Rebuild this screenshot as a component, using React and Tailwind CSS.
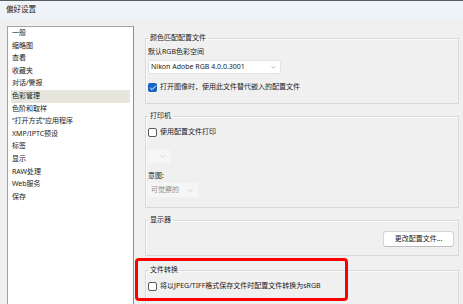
import { Check, ChevronDown } from "lucide-react";

const NAV = [
    "一般",
    "缩略图",
    "查看",
    "收藏夹",
    "对话/警报",
    "色彩管理",
    "色阶和取样",
    "\u201C打开方式\u201D应用程序",
    "XMP/IPTC预设",
    "标签",
    "显示",
    "RAW处理",
    "Web服务",
    "保存",
];

function Box({ checked }) {
    return checked ? (
        <span className="w-[9px] h-[9px] rounded-[2px] bg-[#1a63c6] flex items-center justify-center">
            <Check size={8} strokeWidth={3} className="text-white" />
        </span>
    ) : (
        <span className="w-[9px] h-[9px] rounded-[2px] border border-[#5a5a5a] bg-white" />
    );
}

function Group({ title, className, children }) {
    return (
        <fieldset className={`border border-[#d9d9d9] px-[2px] shadow-[inset_1px_1px_0_#fafafa] flex flex-col ${className}`}>
            <legend className="ml-[0px] px-[2px] h-[10px] leading-[10px]">{title}</legend>
            {children}
        </fieldset>
    );
}

export default function App() {
    return (
        <div className="relative w-[463px] h-[304px] overflow-hidden bg-[#f0f0f0] border-t border-[#5c5c5c] text-[7px] text-[#1b1b1b] font-['Noto_Sans','Noto_Sans_CJK_SC',sans-serif]">
            <div className="h-[18px] bg-[#eef3fa] pl-[6px] flex items-center text-[7.5px]">偏好设置</div>
            <div className="flex pt-[7px]">
                <div className="ml-[7px] w-[127px] h-[300px] bg-white border border-[#a3a3a3] border-r-[#8f8f8f]">
                    {NAV.map((n) => (
                        <div
                            key={n}
                            className={`mx-[3px] pl-[1px] h-[12.6px] leading-[12.6px] ${n === "色彩管理" ? "bg-[#e6e6dc]" : ""}`}
                        >
                            {n}
                        </div>
                    ))}
                </div>
                <div className="ml-[11px] w-[314px] flex flex-col pt-[7px]">
                    <Group title="颜色匹配配置文件" className="h-[71px]">
                        <div className="mt-[4px] h-[10px] leading-[10px]">默认RGB色彩空间</div>
                        <div className="mt-[3px] h-[14px] w-[133px] bg-white border border-[#e3e3e3] rounded-[2px] flex items-center justify-between pl-[2px] pr-[3px]">
                            <span>Nikon Adobe RGB 4.0.0.3001</span>
                            <ChevronDown size={7} className="text-[#8a8a8a]" />
                        </div>
                        <div className="mt-[8.5px] h-[10px] flex items-center gap-[3px]">
                            <Box checked />
                            <span>打开图像时，使用此文件替代嵌入的配置文件</span>
                        </div>
                    </Group>
                    <Group title="打印机" className="h-[97px] mt-[7px]">
                        <div className="mt-[6.5px] h-[10px] flex items-center gap-[3px]">
                            <Box />
                            <span>使用配置文件打印</span>
                        </div>
                        <div className="mt-[12.5px] h-[13px] w-[22px] bg-[#f6f6f6] flex items-center justify-end pr-[4px]">
                            <ChevronDown size={7} className="text-[#b5b5b5]" />
                        </div>
                        <div className="mt-[8px] h-[10px] leading-[10px]">意图:</div>
                        <div className="mt-[2px] h-[14px] w-[50px] bg-[#f6f6f6] flex items-center justify-between pl-[3px] pr-[4px] text-[#8c8c8c]">
                            <span>可觉察的</span>
                            <ChevronDown size={7} className="text-[#b5b5b5]" />
                        </div>
                    </Group>
                    <Group title="显示器" className="h-[41px] mt-[7px]">
                        <button className="self-end mr-[2px] mt-[6px] h-[16px] w-[71px] bg-white border border-[#d4d4d4] border-b-[#bdbdbd] rounded-[3px] flex items-center justify-center">
                            更改配置文件...
                        </button>
                    </Group>
                    <Group title="文件转换" className="h-[40px] mt-[9px]">
                        <div className="mt-[6px] h-[10px] flex items-center gap-[3px]">
                            <Box />
                            <span>将以JPEG/TIFF格式保存文件时配置文件转换为sRGB</span>
                        </div>
                    </Group>
                </div>
            </div>
            <div className="absolute left-[135px] top-[257px] w-[213px] h-[43px] border-[3px] border-[#ff0000] rounded-[4px]" />
        </div>
    );
}
